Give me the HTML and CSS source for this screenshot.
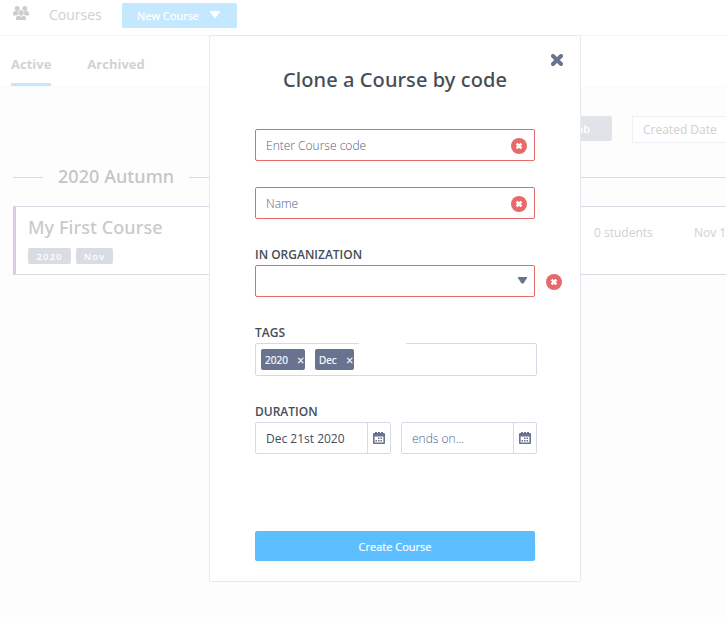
FILE: index.html
```html
<!DOCTYPE html>
<html lang="en">
<head>
<meta charset="utf-8">
<title>Courses</title>
<link rel="stylesheet" href="styles.css">
</head>
<body>
<svg class="defs" aria-hidden="true">
  <symbol id="cross" viewBox="0 0 12 12"><path d="M2 2l8 8M10 2L2 10" fill="none" stroke="currentColor" stroke-width="3.900" stroke-linecap="round"/></symbol>
  <symbol id="error" viewBox="0 0 16 16"><circle cx="8" cy="8" r="8" fill="#e8696b"/><path d="M5.600 5.600l4.800 4.800M10.400 5.600l-4.800 4.800" stroke="#fff" stroke-width="2.600"/></symbol>
  <symbol id="calendar" viewBox="0 0 12 12"><path fill="currentColor" fill-rule="evenodd" d="M0 2q0-1 1-1h1V0h2v1h1V0h2v1h1V0h2v1h1q1 0 1 1v9q0 1-1 1H1q-1 0-1-1zM1.600 4.500v5.900h8.800V4.500z"/><path fill="currentColor" d="M5 5.500h1.500V7H5zm2.500 0H9V7H7.500zM2.500 8H4v1.500H2.500zM5 8h1.500v1.500H5zm2.500 0H9v1.500H7.500z"/></symbol>
</svg>
<div class="page">
  <header class="topbar">
    <svg class="people" viewBox="0 0 16 14" fill="currentColor"><circle cx="4.200" cy="2.500" r="2.500"/><circle cx="11.800" cy="2.500" r="2.500"/><path d="M0 9.500V7q0-2 2-2h3L6 8 3.500 9.500zM16 9.500V7q0-2-2-2h-3L10 8l2.500 1.500z"/><circle cx="8" cy="6.800" r="3.100" stroke="#fff" stroke-width=".6"/><path d="M3 14v-1.500Q3 9.800 5.800 9.800L8 11l2.200-1.200q2.800 0 2.800 2.700V14z"/></svg>
    <span class="brand">Courses</span>
    <button class="new-course"><span>New Course</span><svg width="10" height="7" viewBox="0 0 10 7"><path d="M0 0h10v1L5.500 7h-1L0 1z" fill="#fff"/></svg></button>
  </header>
  <nav class="tabs"><a class="tab selected">Active</a><a class="tab">Archived</a></nav>
  <div class="filters"><span class="lab">Lab</span><span class="sort">Created Date</span></div>
  <h2 class="term"><span>2020 Autumn</span></h2>
  <article class="course">
    <div class="info"><h3>My First Course</h3><div class="chips"><span class="chip">2020</span><span class="chip nov">Nov</span></div></div>
    <span class="students">0 students</span><span class="date">Nov 1</span>
  </article>
</div>
<form class="modal">
  <button type="button" class="close" aria-label="Close"><svg width="12" height="12"><use href="#cross"/></svg></button>
  <h1>Clone a Course by code</h1>
  <div class="field invalid"><span class="hint">Enter Course code</span><svg width="16" height="16"><use href="#error"/></svg></div>
  <div class="field invalid name"><span class="hint">Name</span><svg width="16" height="16"><use href="#error"/></svg></div>
  <label class="org-label">IN ORGANIZATION</label>
  <div class="org">
    <div class="field invalid"><svg class="arrow" width="9" height="7" viewBox="0 0 9 7"><path d="M0 0h9v1L5.500 6.500h-2L0 1z" fill="#69738f"/></svg></div>
    <svg width="16" height="16"><use href="#error"/></svg>
  </div>
  <label class="tags-label">TAGS</label>
  <div class="tags"><span class="tag"><span>2020</span><b>×</b></span><span class="tag dec"><span>Dec</span><b>×</b></span></div>
  <label class="duration-label">DURATION</label>
  <div class="dates">
    <div class="datebox"><span>Dec 21st 2020</span><i><svg width="12" height="12"><use href="#calendar"/></svg></i></div>
    <div class="datebox"><span class="hint">ends on...</span><i><svg width="12" height="12"><use href="#calendar"/></svg></i></div>
  </div>
  <button type="button" class="create">Create Course</button>
</form>
</body>
</html>
```

FILE: styles.css
```css
* { box-sizing: border-box; }
body { margin: 0; width: 726px; height: 617px; overflow: hidden; background: #fdfdfd; font-family: "Open Sans", sans-serif; font-size: 12px; color: #d0d0d0; }
button { border: 0; padding: 0; font: inherit; }
h1, h2, h3 { margin: 0; font-family: "Noto Sans", sans-serif; font-weight: 500; }
svg { display: block; flex: none; }
.defs { position: absolute; width: 0; height: 0; }
.page { width: 726px; }
.topbar { height: 36px; display: flex; align-items: flex-start; background: #fff; border-bottom: 1px solid #f5f5f7; }
.people { width: 16px; height: 14px; margin: 6px 0 0 13px; color: #cccdd0; }
.brand { width: 73px; margin-left: 20px; font-size: 14px; line-height: 30px; color: #d0d0d0; white-space: nowrap; }
.new-course { width: 115px; height: 25px; margin-top: 3px; border-radius: 2px; background: #c3e8ff; color: #fff; font-size: 11px; font-weight: 500; -webkit-text-stroke: .25px #fff; display: flex; align-items: center; padding: 0 17px 0 15px; justify-content: space-between; }
.new-course svg { margin-bottom: 3px; }
.tabs { height: 51px; padding-left: 11px; display: flex; gap: 36px; background: #fff; border-bottom: 1px solid #fafafa; }
.tab { height: 50px; line-height: 57px; font-size: 13px; font-weight: 700; color: #d2d2d4; border-bottom: 3px solid transparent; }
.selected { border-color: #c3e8ff; }
.filters { margin-top: 29px; height: 27px; display: flex; justify-content: flex-end; align-items: flex-start; }
.lab { width: 62px; height: 25px; border-radius: 2px; background: #e0e3e8; color: #fff; font-size: 11px; font-weight: 600; line-height: 26px; text-align: right; padding-right: 22px; margin-right: 20px; }
.sort { width: 94px; height: 27px; border: 1px solid #f0f0f7; border-right: 0; line-height: 25px; padding-left: 10px; background: #fff; white-space: nowrap; }
.term { margin: 20px 0 0 13px; height: 27px; display: flex; align-items: center; font-size: 18px; line-height: 27px; letter-spacing: .06px; color: #c5c5c5; }
.term::before, .term::after { content: ""; height: 1px; background: #dadbe5; margin-top: 2px; }
.term::before { width: 30px; margin-right: 15px; }
.term::after { flex: 1; margin-left: 15px; }
.course { margin: 16px 0 0 13px; height: 69px; display: flex; border: 1px solid #dadbe5; border-left: 3px solid #dccbe6; border-right: 0; background: #fff; }
.info { width: 578px; padding: 8px 0 0 12px; }
.info h3 { font-size: 18px; line-height: 25px; letter-spacing: .08px; color: #cacaca; }
.chips { display: flex; gap: 5px; margin-top: 8px; }
.chip { width: 43px; height: 16px; border-radius: 2px; background: #d9dce4; color: #fff; font-size: 9.5px; font-weight: 600; line-height: 17px; letter-spacing: 1.1px; text-align: center; }
.nov { width: 37px; }
.students, .date { line-height: 51px; white-space: nowrap; }
.students { width: 100px; }
.date { width: 32px; }
.modal { position: absolute; left: 209px; top: 35px; width: 372px; height: 547px; border: 1px solid #e8e9ee; border-radius: 2px; background: #fff; padding: 29px 43px 0 45px; color: #454d59; }
.close { position: absolute; right: 17px; top: 18px; width: 12px; height: 12px; background: none; color: #69738f; }
h1 { width: 280px; height: 30px; line-height: 30px; font-size: 20px; letter-spacing: .09px; text-align: center; }
.field { flex: none; width: 280px; height: 32px; display: flex; align-items: center; justify-content: space-between; padding: 0 7px 0 10px; border: 1px solid #e8696b; border-radius: 2px; }
.field svg { margin-top: 1px; }
h1 + .field { margin-top: 34px; }
.name { margin-top: 26px; }
.hint { color: #56617f; font-weight: 300; }
.field .hint { padding-top: 1px; }
label { display: block; height: 17px; line-height: 17px; font-size: 12px; font-weight: 600; }
.org-label { margin-top: 27px; }
.org { display: flex; align-items: center; gap: 11px; margin-top: 2px; }
.org > svg { margin-top: 2px; }
.field .arrow { margin: -2px 0 0 auto; }
.tags-label { margin-top: 27px; }
.tags { position: relative; width: 282px; height: 33px; margin-top: 2px; padding: 5px; border: 1px solid #d8d9e7; border-radius: 2px; display: flex; gap: 10px; }
.tags::after { content: ""; position: absolute; left: 103px; top: -1px; width: 47px; height: 1px; background: #fff; }
.tag { width: 44px; height: 21px; border-radius: 2px; background: #69738f; color: #fff; font-size: 10px; line-height: 23px; padding: 0 1px 0 4px; display: flex; justify-content: space-between; font-weight: 500; -webkit-text-stroke: .2px #fff; }
.tag b { font-size: 12px; font-weight: 500; line-height: 23px; }
.dec { width: 39px; }
.duration-label { margin-top: 27px; }
.dates { display: flex; gap: 10px; margin-top: 2px; }
.datebox { width: 136px; height: 32px; border: 1px solid #d8d9e7; border-radius: 2px; display: flex; justify-content: space-between; line-height: 32px; padding-left: 10px; }
.datebox i { width: 23px; border-left: 1px solid #d8d9e7; display: flex; align-items: center; justify-content: center; color: #69738f; }
.create { display: block; width: 280px; height: 30px; margin-top: 77px; border-radius: 2px; background: #5cbeff; color: #fff; font-size: 11px; font-weight: 500; -webkit-text-stroke: .2px #fff; line-height: 32px; }
```
